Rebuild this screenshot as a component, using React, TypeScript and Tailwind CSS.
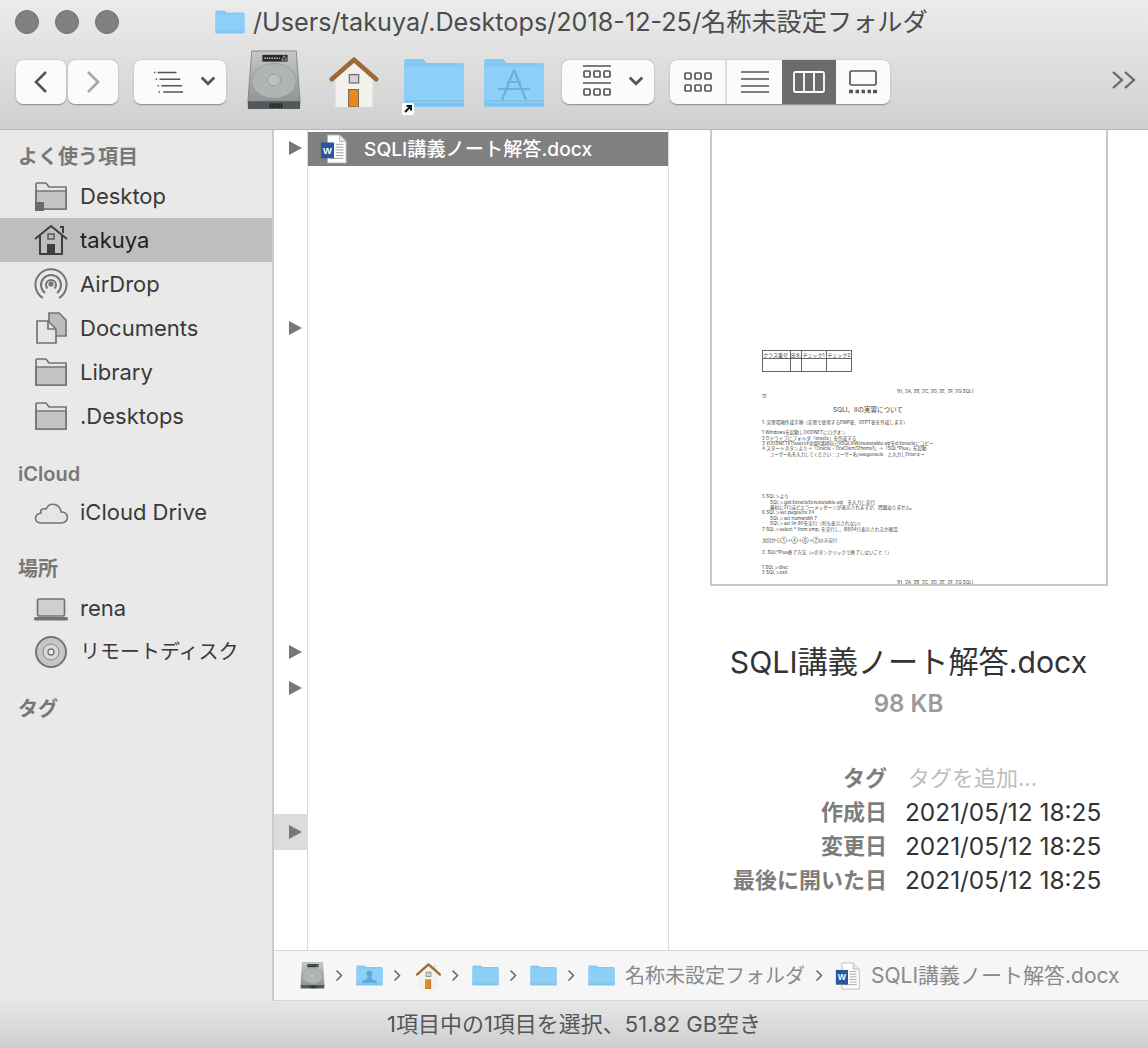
import type { ReactNode } from 'react';

function Folder({ className, mark }: { className: string; mark?: 'app' | 'user' }) {
  return (
    <svg className={className} viewBox="0 0 62 50" preserveAspectRatio="none">
      <path d="M1 3.5Q1 1 3.5 1H19Q21 1 22 3L23 5H59Q61 5 61 7V47Q61 49 59 49H3Q1 49 1 47Z" fill="#84c9f3" />
      <path d="M1 9H61V46H1Z" fill="#8dcff6" />
      <path d="M1 43H61M1 46H61" stroke="#72b9e6" strokeWidth="1" />
      {mark === 'app' && (
        <g fill="none" stroke="#68b2e2" strokeWidth="2.2">
          <path d="M31 12L19 42M31 12L43 42M15 31H47M24 24H38" />
        </g>
      )}
      {mark === 'user' && (
        <g fill="#5ea9dc">
          <circle cx="31" cy="20" r="7" />
          <path d="M27 27H35L37 34L48 38V42H14V38L25 34Z" />
        </g>
      )}
    </svg>
  );
}

function Drive({ className }: { className: string }) {
  return (
    <svg className={className} viewBox="0 0 56 62">
      <defs>
        <linearGradient id="driveBody" x1="0" y1="0" x2="0" y2="1">
          <stop offset="0" stopColor="#c6c9c9" />
          <stop offset="1" stopColor="#8f9393" />
        </linearGradient>
      </defs>
      <path d="M5 1H51L55 54H1Z" fill="url(#driveBody)" stroke="#77797a" strokeWidth="0.8" />
      <rect x="11" y="5" width="26" height="7" fill="#2a2a2a" transform="translate(5 0)" />
      <path d="M18 8.5H34" stroke="#bbb" strokeWidth="1.4" strokeDasharray="1.5 1" />
      <path d="M36 10.5L38.5 6L41 10.5Z" fill="none" stroke="#ccc" strokeWidth="0.7" />
      <ellipse cx="28" cy="32" rx="23" ry="18" fill="#b0b4b4" stroke="#969a9a" />
      <ellipse cx="28" cy="31" rx="7" ry="6" fill="#bcc0c0" stroke="#999d9d" />
      <rect x="1" y="53" width="54" height="8" rx="1" fill="#55585a" />
      <path d="M24 55V60M26 55V60M28 55V60M30 55V60M32 55V60M34 55V60M36 55V60" stroke="#111" strokeWidth="1" />
    </svg>
  );
}

function House({ className }: { className: string }) {
  return (
    <svg className={className} viewBox="0 0 52 54">
      <rect x="36" y="4" width="6" height="14" fill="#e0e0e0" />
      <path d="M6 21L26 4L46 21V54H6Z" fill="#f3f1ec" />
      <path d="M2 24L26 3L50 24" fill="none" stroke="#9a6a3a" strokeWidth="5" strokeLinejoin="round" strokeLinecap="round" />
      <rect x="21" y="19" width="10" height="9" fill="#d4d4d4" stroke="#777" strokeWidth="1.5" />
      <rect x="20" y="35" width="11" height="19" fill="#e8861f" stroke="#555" strokeWidth="0.8" />
    </svg>
  );
}

function WordDoc({ className }: { className: string }) {
  return (
    <svg className={className} viewBox="0 0 30 32">
      <path d="M8 1H21L28 8V31H8Z" fill="#fff" stroke="#b5b5b5" />
      <path d="M21 1V8H28" fill="#e8e8e8" stroke="#b5b5b5" />
      <path d="M17 11H25M17 14H25M17 17H25M17 20H25M17 23H25M11 26H25" stroke="#9a9a9a" />
      <rect x="1" y="9" width="14" height="17" fill="#2b579a" />
      <text x="8" y="21" textAnchor="middle" fontSize="10" fontWeight="700" fill="#fff" fontFamily="Liberation Sans, sans-serif">W</text>
    </svg>
  );
}

function Chevron({ dir, className }: { dir: 'left' | 'right' | 'down'; className: string }) {
  const d = dir === 'left' ? 'M15 3L5 13L15 23' : dir === 'right' ? 'M5 3L15 13L5 23' : 'M3 8L10 15L17 8';
  return (
    <svg className={className} viewBox="0 0 20 26" fill="none" stroke="currentColor" strokeWidth={dir === 'down' ? 3 : 2.6}>
      <path d={d} />
    </svg>
  );
}

function ToolButton({ className, children }: { className: string; children: ReactNode }) {
  return (
    <div className={`flex h-[44px] items-center rounded-[7px] bg-[#fbfbfb] shadow-[0_0.5px_1.5px_rgba(0,0,0,0.35)] ${className}`}>
      {children}
    </div>
  );
}

function ListMenuIcon() {
  return (
    <svg className="h-[24px] w-[32px] text-[#555]" viewBox="0 0 34 24" stroke="currentColor" strokeWidth="1.6">
      <path d="M2 2H3.5M6 2H26M4 9H5.5M8 9H30M6 16H7.5M10 16H32M7 22.5H8.5M12 22.5H33" />
    </svg>
  );
}

function GroupIcon() {
  return (
    <svg className="h-[34px] w-[28px] text-[#555]" viewBox="0 0 28 34" fill="none" stroke="currentColor" strokeWidth="1.7">
      <path d="M0 1H28M0 18H28" />
      <rect x="1" y="6" width="6" height="6" rx="1" />
      <rect x="11" y="6" width="6" height="6" rx="1" />
      <rect x="21" y="6" width="6" height="6" rx="1" />
      <rect x="1" y="24" width="6" height="6" rx="1" />
      <rect x="11" y="24" width="6" height="6" rx="1" />
      <rect x="21" y="24" width="6" height="6" rx="1" />
    </svg>
  );
}

function ViewSegments() {
  return (
    <div className="ml-[16px] flex h-[44px] w-[220px] overflow-hidden rounded-[7px] bg-[#fbfbfb] text-[#555] shadow-[0_0.5px_1.5px_rgba(0,0,0,0.35)]">
      <div className="flex w-[57px] items-center justify-center border-r-2 border-[#dedede]">
        <svg className="h-[20px] w-[28px]" viewBox="0 0 28 20" fill="none" stroke="currentColor" strokeWidth="1.7">
          <rect x="1" y="1" width="6" height="6" rx="1" />
          <rect x="11" y="1" width="6" height="6" rx="1" />
          <rect x="21" y="1" width="6" height="6" rx="1" />
          <rect x="1" y="13" width="6" height="6" rx="1" />
          <rect x="11" y="13" width="6" height="6" rx="1" />
          <rect x="21" y="13" width="6" height="6" rx="1" />
        </svg>
      </div>
      <div className="flex w-[55px] items-center justify-center">
        <svg className="h-[22px] w-[28px]" viewBox="0 0 28 22" stroke="currentColor" strokeWidth="1.7">
          <path d="M0 1H28M0 8H28M0 15H28M0 21H28" />
        </svg>
      </div>
      <div className="flex w-[54px] items-center justify-center bg-[#6b6b6b] text-white">
        <svg className="h-[22px] w-[32px]" viewBox="0 0 32 22" fill="none" stroke="currentColor" strokeWidth="1.8">
          <rect x="1" y="1" width="30" height="20" rx="1.5" />
          <path d="M11 1V21M21 1V21" />
        </svg>
      </div>
      <div className="flex flex-1 items-center justify-center">
        <svg className="h-[24px] w-[28px]" viewBox="0 0 28 24" fill="none" stroke="currentColor" strokeWidth="1.7">
          <rect x="1" y="1" width="26" height="14" rx="1.5" />
          <path d="M0 21.5H4M6.5 21.5H10M12.5 21.5H16M18.5 21.5H22M24 21.5H28" strokeWidth="3.4" />
        </svg>
      </div>
    </div>
  );
}

function Toolbar() {
  return (
    <div className="h-[130px] shrink-0 border-b border-[#b4b4b4] bg-gradient-to-b from-[#ececec] to-[#d0d0d0]">
      <div className="relative flex h-[44px] items-center pl-[15px]">
        <div className="flex gap-[16px]">
          <div className="h-[24px] w-[24px] rounded-full border border-[#727272] bg-[#808080]" />
          <div className="h-[24px] w-[24px] rounded-full border border-[#727272] bg-[#808080]" />
          <div className="h-[24px] w-[24px] rounded-full border border-[#727272] bg-[#808080]" />
        </div>
        <Folder className="ml-[96px] h-[24px] w-[30px]" />
        <span className="ml-[8px] whitespace-nowrap text-[25.2px] leading-[30px] text-[#4c4c4c]">/Users/takuya/.Desktops/2018-12-25/名称未設定フォルダ</span>
      </div>
      <div className="flex h-[76px] items-start pl-[16px]">
        <div className="mt-[16px] flex gap-[2px]">
          <ToolButton className="w-[50px] justify-center text-[#555]"><Chevron dir="left" className="h-[26px] w-[20px]" /></ToolButton>
          <ToolButton className="w-[50px] justify-center text-[#a8a8a8]"><Chevron dir="right" className="h-[26px] w-[20px]" /></ToolButton>
        </div>
        <ToolButton className="mt-[16px] ml-[16px] w-[92px] gap-[15px] pl-[18px] text-[#555]">
          <ListMenuIcon />
          <Chevron dir="down" className="h-[24px] w-[18px]" />
        </ToolButton>
        <Drive className="mt-[6px] ml-[20px] h-[60px] w-[56px]" />
        <House className="mt-[13px] ml-[26px] h-[50px] w-[52px]" />
        <div className="relative mt-[14px] ml-[23px]">
          <Folder className="h-[50px] w-[62px]" />
          <svg className="absolute -bottom-[7px] -left-[1px] h-[12px] w-[12px]" viewBox="0 0 12 12">
            <rect width="12" height="12" rx="2" fill="#fff" />
            <path d="M3 9L8.5 3.5M4.5 3H9V7.5" stroke="#111" strokeWidth="2" fill="none" />
          </svg>
        </div>
        <Folder mark="app" className="mt-[14px] ml-[18px] h-[50px] w-[62px]" />
        <ToolButton className="mt-[16px] ml-[17px] w-[92px] gap-[16px] pl-[21px] text-[#555]">
          <GroupIcon />
          <Chevron dir="down" className="h-[24px] w-[18px]" />
        </ToolButton>
        <div className="mt-[16px]"><ViewSegments /></div>
        <div className="mt-[26px] ml-auto mr-[12px] flex text-[#666]">
          <svg className="h-[20px] w-[24px]" viewBox="0 0 24 20" fill="none" stroke="currentColor" strokeWidth="2.2">
            <path d="M1 2L10 10L1 18M13 2L22 10L13 18" />
          </svg>
        </div>
      </div>
    </div>
  );
}

const strokeIcon = 'h-[32px] w-[34px] text-[#747474]';

function SideFolder({ shortcut }: { shortcut?: boolean }) {
  return (
    <svg className={strokeIcon} viewBox="0 0 34 32" stroke="currentColor" strokeWidth="1.7">
      <path d="M2 4Q2 3 3 3H12L15 7H32V29H2Z" fill="#e6e6e6" />
      <path d="M2 11H32V29H2Z" fill="#c4c4c4" />
      {shortcut && <rect x="1" y="22" width="9" height="9" fill="#6a6a6a" stroke="none" />}
    </svg>
  );
}

function SideIcon({ name }: { name: string }) {
  if (name === 'folder') return <SideFolder />;
  if (name === 'shortcut') return <SideFolder shortcut />;
  if (name === 'home')
    return (
      <svg className="h-[32px] w-[34px] text-[#3f3f3f]" viewBox="0 0 34 32" stroke="currentColor" strokeWidth="2" fill="none">
        <path d="M1 15L17 2L33 15M6 12V30H28V12" strokeLinejoin="round" />
        <path d="M26 3H29V9" />
        <rect x="14" y="10" width="6" height="5" strokeWidth="1.2" />
        <rect x="13" y="20" width="8" height="10" fill="currentColor" stroke="none" />
      </svg>
    );
  if (name === 'airdrop')
    return (
      <svg className={strokeIcon} viewBox="0 0 34 32" fill="none" stroke="currentColor" strokeWidth="2">
        <path d="M9 30A15.5 15.5 0 1 1 25 30" />
        <path d="M11 25A10 10 0 1 1 23 25" />
        <path d="M13.5 20.5A5 5 0 1 1 20.5 20.5" />
        <circle cx="17" cy="16" r="1.6" fill="currentColor" />
      </svg>
    );
  if (name === 'documents')
    return (
      <svg className={strokeIcon} viewBox="0 0 34 32" stroke="currentColor" strokeWidth="1.7">
        <path d="M15 1H25L32 8V24H15Z" fill="#bdbdbd" />
        <path d="M3 9H14L22 17V31H3Z" fill="#e6e6e6" />
        <path d="M14 9V17H22" fill="none" />
      </svg>
    );
  if (name === 'cloud')
    return (
      <svg className={strokeIcon} viewBox="0 0 34 32" fill="#e6e6e6" stroke="currentColor" strokeWidth="1.6">
        <path d="M8 27H27C36 27 35 15 27 16C26 8 16 5 12 13C7 12 6 15 7 17C-1 19 0 27 8 27Z" />
      </svg>
    );
  if (name === 'laptop')
    return (
      <svg className={strokeIcon} viewBox="0 0 34 32" stroke="currentColor" strokeWidth="1.7">
        <rect x="3.5" y="7" width="27" height="17" rx="1.5" fill="#cfcfcf" />
        <rect x="0" y="25" width="34" height="3.5" rx="1.5" fill="currentColor" stroke="none" />
      </svg>
    );
  return (
    <svg className={strokeIcon} viewBox="0 0 34 32" stroke="currentColor">
      <circle cx="17" cy="16" r="15" fill="#c6c6c6" strokeWidth="2" />
      <circle cx="17" cy="16" r="8" fill="#dadada" strokeWidth="0.8" />
      <circle cx="17" cy="16" r="3" fill="#efefef" strokeWidth="1.4" />
    </svg>
  );
}

function SideItem({ icon, label, active, small }: { icon: string; label: string; active?: boolean; small?: boolean }) {
  return (
    <div className={`flex h-[44px] items-center pl-[34px] ${active ? 'bg-[#bebebe] text-[#1f1f1f]' : 'text-[#3a3a3a]'}`}>
      <SideIcon name={icon} />
      <span className={`ml-[12px] whitespace-nowrap leading-[28px] ${small ? 'text-[20px]' : 'text-[22px]'}`}>{label}</span>
    </div>
  );
}

function SideHeader({ className, children }: { className: string; children: ReactNode }) {
  return <div className={`pl-[18px] text-[20px] leading-[26px] font-semibold text-[#777] ${className}`}>{children}</div>;
}

function Sidebar() {
  return (
    <aside className="w-[274px] shrink-0 border-r-2 border-[#cbcbcb] bg-[#e9e9e9]">
      <SideHeader className="mt-[14px] mb-[4px]">よく使う項目</SideHeader>
      <SideItem icon="shortcut" label="Desktop" />
      <SideItem icon="home" label="takuya" active />
      <SideItem icon="airdrop" label="AirDrop" />
      <SideItem icon="documents" label="Documents" />
      <SideItem icon="folder" label="Library" />
      <SideItem icon="folder" label=".Desktops" />
      <SideHeader className="mt-[23px] mb-[3px]">iCloud</SideHeader>
      <SideItem icon="cloud" label="iCloud Drive" />
      <SideHeader className="mt-[22px] mb-[4px]">場所</SideHeader>
      <SideItem icon="laptop" label="rena" />
      <SideItem icon="disc" label="リモートディスク" small />
      <SideHeader className="mt-[22px]">タグ</SideHeader>
    </aside>
  );
}

function Arrow({ className, active }: { className: string; active?: boolean }) {
  return (
    <div className={`flex h-[36px] w-full items-center justify-center pl-[10px] ${active ? 'bg-[#dcdcdc]' : ''} ${className}`}>
      <div className="h-0 w-0 border-y-[7px] border-l-[13px] border-y-transparent border-l-[#777]" />
    </div>
  );
}

function Thumbnail() {
  return (
    <div className="ml-[41px] h-[456px] w-[398px] overflow-hidden border-x-2 border-b-2 border-[#c9c9c9] bg-white pt-[220px] pl-[50px] text-[4.6px] leading-[5.4px] whitespace-nowrap text-[#444]">
      <table className="h-[22px] w-[90px] border-collapse border border-[#666] text-[5px] leading-[6px]">
        <tbody>
          <tr className="h-[8px]">
            <td className="w-[28px] border border-[#666]">クラス番号</td>
            <td className="w-[12px] border border-[#666]">氏名</td>
            <td className="w-[25px] border border-[#666]">チェック1</td>
            <td className="w-[25px] border border-[#666]">チェック2</td>
          </tr>
          <tr>
            <td className="border border-[#666]"></td>
            <td className="border border-[#666]"></td>
            <td className="border border-[#666]"></td>
            <td className="border border-[#666]"></td>
          </tr>
        </tbody>
      </table>
      <div className="mt-[17px] pl-[135px]">1H, 2A, 2B, 2C, 2D, 2E, 2F, 2G SQLⅠ</div>
      <div>12</div>
      <div className="mt-[6px] pl-[71px] text-[6.5px] leading-[8px]">SQLⅠ、Ⅱの実習について</div>
      <div className="mt-[6px]">1. 実習環境作成手順（実習で使用するEMP表、DEPT表を作成します）</div>
      <div className="mt-[5px]">1 Windowsを起動しOODNETにログオン</div>
      <div>2 Dドライブにフォルダ「oracle」を作成する</div>
      <div>3 ¥ODSNET¥Tlsserv¥全園¥講師自己¥SQLⅠ¥Wcreatetable.sqlをd:¥oracleにコピー</div>
      <div>4 スタートボタンより→「Oracle - OraClient12home1」→「SQL*Plus」を起動</div>
      <div className="pl-[8px] text-[4.4px]">ユーザー名を入力してください：ユーザー名/sae@oracle　と入力しEnterキー</div>
      <div className="mt-[37px]">5 SQL＞より</div>
      <div className="pl-[8px]">SQL＞@d:¥oracle¥createtable.sql　を入力し実行</div>
      <div className="pl-[8px]">最初に2行ほどエラーメッセージが表示されますが、問題ありません。</div>
      <div>6 SQL＞set pagesize 24</div>
      <div className="pl-[8px]">SQL＞set numwidth 7</div>
      <div className="pl-[8px]">SQL＞set lin 90を実行（何も表示されない）</div>
      <div>7 SQL＞select * from emp; を実行し、8列14行表示されるか確認</div>
      <div className="mt-[6px]">次回から①→④→⑥→⑦のみ実行</div>
      <div className="mt-[6px]">2. SQL*Plus終了方法（×ボタンクリックで終了しないこと！）</div>
      <div className="mt-[10px]">1 SQL＞disc</div>
      <div>2 SQL＞exit</div>
      <div className="mt-[4px] pl-[135px]">1H, 2A, 2B, 2C, 2D, 2E, 2F, 2G SQLⅠ</div>
    </div>
  );
}

function MetaRow({ label, value, muted }: { label: string; value: string; muted?: boolean }) {
  return (
    <div className="flex h-[34px] items-center">
      <span className="w-[218px] text-right text-[22px] font-semibold whitespace-nowrap text-[#7d7d7d]">{label}</span>
      <span className={`whitespace-nowrap ${muted ? 'ml-[21px] text-[22px] text-[#bdbdbd]' : 'ml-[18px] text-[24.4px] text-[#333]'}`}>{value}</span>
    </div>
  );
}

function Preview() {
  return (
    <div className="flex-1 bg-white">
      <Thumbnail />
      <div className="mt-[54px] text-center text-[30.2px] leading-[44px] whitespace-nowrap text-[#333]">SQLI講義ノート解答.docx</div>
      <div className="mt-[4px] text-center text-[24px] leading-[32px] font-semibold text-[#9a9a9a]">98 KB</div>
      <div className="mt-[41px]">
        <MetaRow label="タグ" value="タグを追加..." muted />
        <MetaRow label="作成日" value="2021/05/12 18:25" />
        <MetaRow label="変更日" value="2021/05/12 18:25" />
        <MetaRow label="最後に開いた日" value="2021/05/12 18:25" />
      </div>
    </div>
  );
}

function PathChevron() {
  return (
    <svg className="h-[13px] w-[8px] text-[#666]" viewBox="0 0 8 13" fill="none" stroke="currentColor" strokeWidth="1.5">
      <path d="M1.5 1.5L6.5 6.5L1.5 11.5" />
    </svg>
  );
}

function PathBar() {
  return (
    <div className="flex h-[51px] shrink-0 items-center gap-[10px] border-y border-[#d6d6d6] bg-[#f6f6f6] pl-[26px]">
      <Drive className="h-[27px] w-[25px]" />
      <PathChevron />
      <Folder mark="user" className="ml-[3px] h-[21px] w-[27px]" />
      <PathChevron />
      <House className="ml-[5px] h-[26px] w-[25px]" />
      <PathChevron />
      <Folder className="ml-[3px] h-[21px] w-[27px]" />
      <PathChevron />
      <Folder className="ml-[3px] h-[21px] w-[27px]" />
      <PathChevron />
      <Folder className="ml-[3px] h-[21px] w-[27px]" />
      <span className="whitespace-nowrap text-[20px] text-[#8a8a8a]">名称未設定フォルダ</span>
      <PathChevron />
      <WordDoc className="ml-[2px] h-[28px] w-[26px]" />
      <span className="whitespace-nowrap text-[21px] text-[#8a8a8a]">SQLI講義ノート解答.docx</span>
    </div>
  );
}

export default function App() {
  return (
    <div className="flex h-[1048px] w-[1148px] flex-col overflow-hidden font-['Inter','Noto_Sans_CJK_JP',sans-serif]">
      <Toolbar />
      <div className="flex min-h-0 flex-1">
        <Sidebar />
        <div className="flex min-w-0 flex-1 flex-col">
          <div className="flex min-h-0 flex-1 bg-white">
            <div className="w-[34px] shrink-0 border-r border-[#dcdcdc]">
              <Arrow className="" />
              <Arrow className="mt-[144px]" />
              <Arrow className="mt-[288px]" />
              <Arrow className="" />
              <Arrow className="mt-[108px]" active />
            </div>
            <div className="w-[361px] shrink-0 border-r border-[#dcdcdc] pt-[2px]">
              <div className="flex h-[34px] items-center bg-[#808080] pl-[12px]">
                <WordDoc className="h-[30px] w-[28px]" />
                <span className="ml-[16px] whitespace-nowrap text-[19.2px] font-medium text-white">SQLI講義ノート解答.docx</span>
              </div>
            </div>
            <Preview />
          </div>
          <PathBar />
        </div>
      </div>
      <div className="flex h-[47px] shrink-0 items-center justify-center bg-gradient-to-b from-[#e6e6e6] to-[#cfcfcf] text-[22px] text-[#555]">
        1項目中の1項目を選択、51.82 GB空き
      </div>
    </div>
  );
}
